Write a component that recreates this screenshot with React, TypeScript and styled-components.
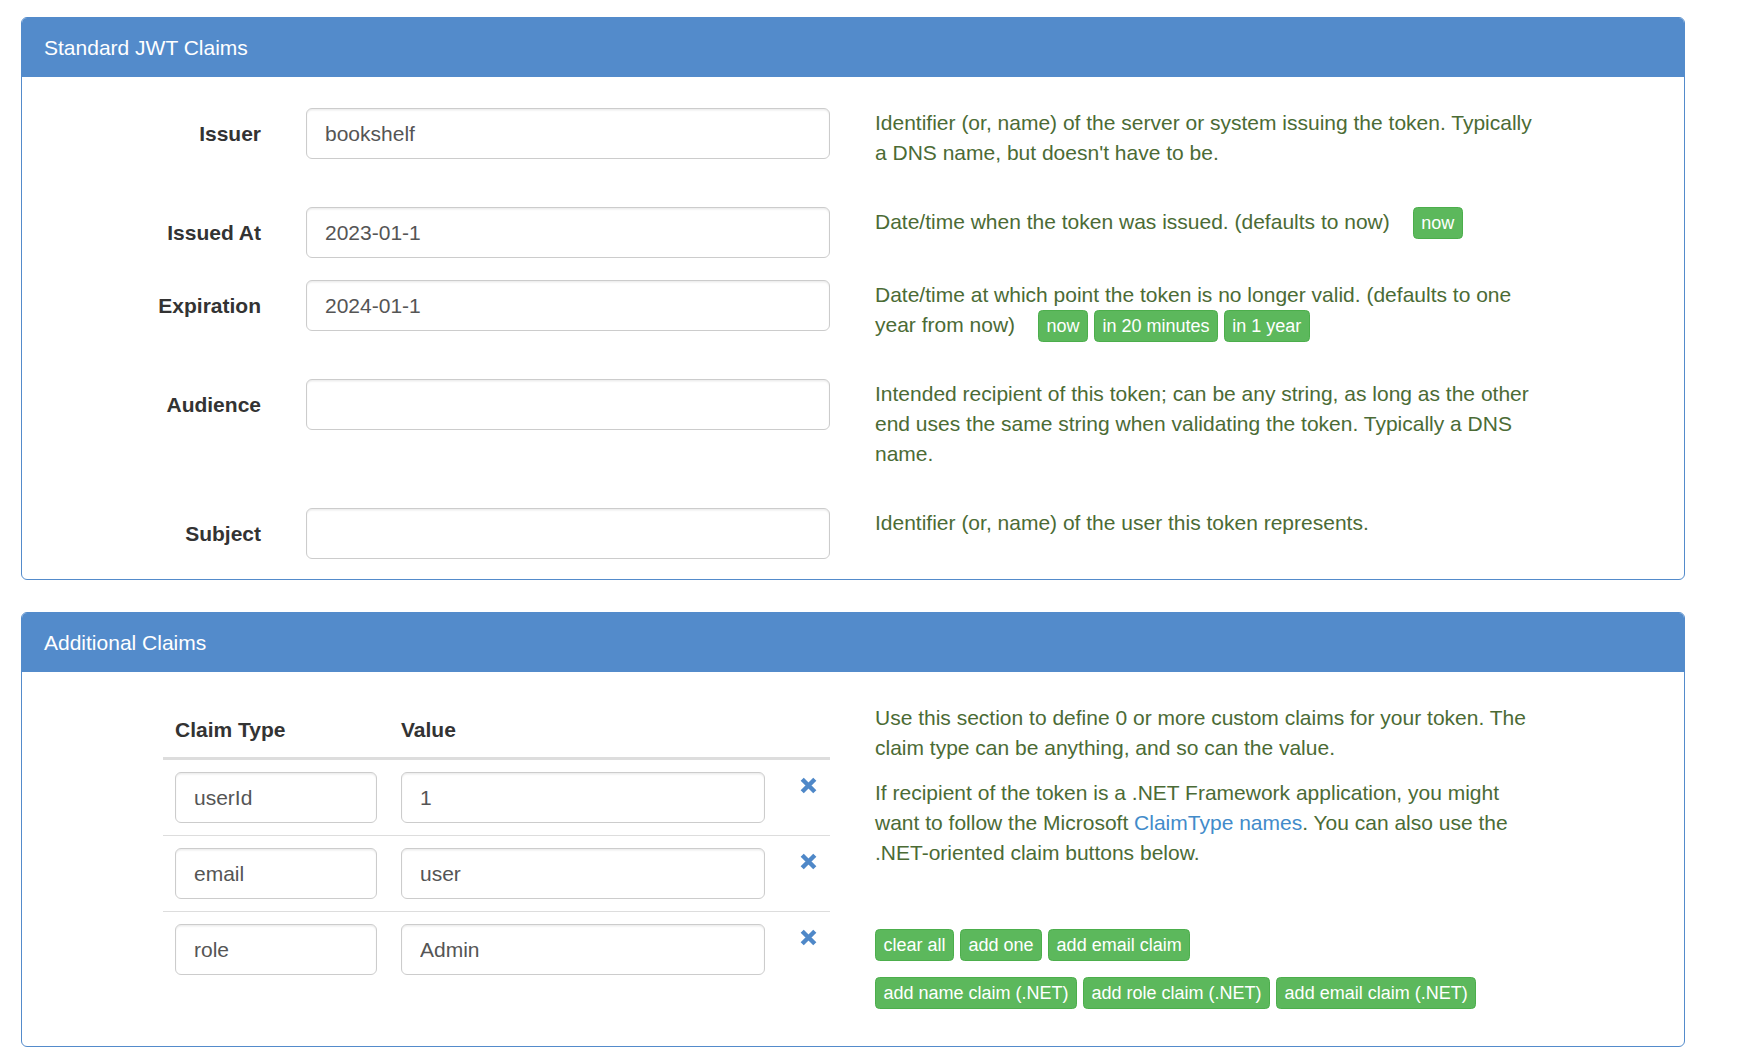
import React from "react";
import styled, { createGlobalStyle } from "styled-components";

const GlobalStyle = createGlobalStyle`
  html, body {
    margin: 0;
    padding: 0;
    background: #ffffff;
  }
  body {
    font-family: "Liberation Sans", Arial, Helvetica, sans-serif;
    font-size: 21px;
    line-height: 30px;
    color: #333333;
  }
  * { box-sizing: border-box; }
`;

const Page = styled.div`
  padding: 17px 0 0 21px;
`;

const Panel = styled.section`
  width: 1664px;
  border: 1px solid #538bcb;
  border-radius: 6px;
  margin-bottom: 32px;
  background: #ffffff;
`;

const PanelHeading = styled.header`
  height: 59px;
  display: flex;
  align-items: center;
  padding: 0 22px;
  background: #538bcb;
  color: #ffffff;
  font-size: 21px;
  border-radius: 5px 5px 0 0;
`;

const FormBody = styled.div`
  padding: 31px 0 20px;
`;

const FormRow = styled.div`
  display: grid;
  grid-template-columns: 239px 524px 668px;
  column-gap: 45px;
  align-items: start;
  margin-bottom: 22px;
  &:last-child { margin-bottom: 0; }
`;

const Label = styled.label`
  height: 51px;
  display: flex;
  align-items: center;
  justify-content: flex-end;
  font-weight: bold;
  color: #333333;
`;

const TextInput = styled.input`
  display: block;
  width: 100%;
  height: 51px;
  padding: 9px 18px;
  font-family: inherit;
  font-size: 21px;
  line-height: 30px;
  color: #555555;
  background: #ffffff;
  border: 1px solid #cccccc;
  border-radius: 6px;
  box-shadow: inset 0 1.5px 1.5px rgba(0, 0, 0, 0.075);
  outline: none;
`;

const Help = styled.p<{ $field?: boolean }>`
  margin: 0 0 ${(p) => (p.$field ? "17px" : "15px")};
  color: #4b6b35;
`;

const Link = styled.a`
  color: #428bca;
  text-decoration: none;
`;

const InlineButtons = styled.span`
  margin-left: 23px;
`;

const SmallButton = styled.button<{ $inline?: boolean }>`
  display: inline-block;
  vertical-align: middle;
  height: 32px;
  margin: ${(p) => (p.$inline ? "-2px 0" : "0")};
  padding: 1.5px 7.5px;
  font-family: inherit;
  font-size: 18px;
  line-height: 27px;
  color: #ffffff;
  background: #5cb85c;
  border: 1px solid #4cae4c;
  border-radius: 4.5px;
  white-space: nowrap;
  cursor: pointer;
`;

const ClaimsBody = styled.div`
  display: grid;
  grid-template-columns: 808px 668px;
  column-gap: 45px;
  align-items: start;
  padding: 31px 0 21px;
`;

const TableArea = styled.div`
  padding-left: 141px;
`;

const ClaimGrid = styled.div<{ $head?: boolean; $first?: boolean }>`
  display: grid;
  grid-template-columns: 226px 388px 53px;
  align-items: start;
  padding: 12px 0;
  border-top: ${(p) => (p.$head || p.$first ? "none" : "1px solid #dddddd")};
  border-bottom: ${(p) => (p.$head ? "3px solid #dddddd" : "none")};
`;

const HeadCell = styled.div`
  padding: 0 12px;
  font-weight: bold;
  color: #333333;
`;

const Cell = styled.div`
  padding: 0 12px;
`;

const RemoveCell = styled.div`
  padding: 5px 0 0 23px;
  line-height: 0;
`;

const RemoveIcon = styled.svg`
  width: 17px;
  height: 17px;
  cursor: pointer;
`;

const ButtonRow = styled.div<{ $first?: boolean }>`
  display: flex;
  gap: 6px;
  margin: ${(p) => (p.$first ? "61px 0 16px" : "0 0 16px")};
`;

const Remove = () => (
  <RemoveIcon viewBox="0 0 17 17" aria-label="remove">
    <path
      d="M2.2 2.2 L14.8 14.8 M14.8 2.2 L2.2 14.8"
      stroke="#4f88c8"
      strokeWidth="4.4"
      strokeLinecap="butt"
      fill="none"
    />
  </RemoveIcon>
);

const claims = [
  { type: "userId", value: "1" },
  { type: "email", value: "user" },
  { type: "role", value: "Admin" },
];

export default function App() {
  return (
    <>
      <GlobalStyle />
      <Page>
        <Panel>
          <PanelHeading>Standard JWT Claims</PanelHeading>
          <FormBody>
            <FormRow>
              <Label>Issuer</Label>
              <TextInput defaultValue="bookshelf" />
              <Help $field>
                Identifier (or, name) of the server or system issuing the token. Typically a DNS name,
                but doesn't have to be.
              </Help>
            </FormRow>
            <FormRow>
              <Label>Issued At</Label>
              <TextInput defaultValue="2023-01-1" />
              <Help $field>
                Date/time when the token was issued. (defaults to now)
                <InlineButtons>
                  <SmallButton $inline>now</SmallButton>
                </InlineButtons>
              </Help>
            </FormRow>
            <FormRow>
              <Label>Expiration</Label>
              <TextInput defaultValue="2024-01-1" />
              <Help $field>
                Date/time at which point the token is no longer valid. (defaults to one year from now)
                <InlineButtons>
                  <SmallButton $inline>now</SmallButton> <SmallButton $inline>in 20 minutes</SmallButton>{" "}
                  <SmallButton $inline>in 1 year</SmallButton>
                </InlineButtons>
              </Help>
            </FormRow>
            <FormRow>
              <Label>Audience</Label>
              <TextInput defaultValue="" />
              <Help $field>
                Intended recipient of this token; can be any string, as long as the other end uses the
                same string when validating the token. Typically a DNS name.
              </Help>
            </FormRow>
            <FormRow>
              <Label>Subject</Label>
              <TextInput defaultValue="" />
              <Help $field>Identifier (or, name) of the user this token represents.</Help>
            </FormRow>
          </FormBody>
        </Panel>

        <Panel>
          <PanelHeading>Additional Claims</PanelHeading>
          <ClaimsBody>
            <TableArea>
              <ClaimGrid $head>
                <HeadCell>Claim Type</HeadCell>
                <HeadCell>Value</HeadCell>
                <HeadCell />
              </ClaimGrid>
              {claims.map((c, i) => (
                <ClaimGrid key={c.type} $first={i === 0}>
                  <Cell>
                    <TextInput defaultValue={c.type} />
                  </Cell>
                  <Cell>
                    <TextInput defaultValue={c.value} />
                  </Cell>
                  <RemoveCell>
                    <Remove />
                  </RemoveCell>
                </ClaimGrid>
              ))}
            </TableArea>
            <div>
              <Help>
                Use this section to define 0 or more custom claims for your token. The claim type can be
                anything, and so can the value.
              </Help>
              <Help>
                If recipient of the token is a .NET Framework application, you might want to follow the
                Microsoft <Link href="#">ClaimType names</Link>. You can also use the .NET-oriented claim
                buttons below.
              </Help>
              <ButtonRow $first>
                <SmallButton>clear all</SmallButton>
                <SmallButton>add one</SmallButton>
                <SmallButton>add email claim</SmallButton>
              </ButtonRow>
              <ButtonRow>
                <SmallButton>add name claim (.NET)</SmallButton>
                <SmallButton>add role claim (.NET)</SmallButton>
                <SmallButton>add email claim (.NET)</SmallButton>
              </ButtonRow>
            </div>
          </ClaimsBody>
        </Panel>
      </Page>
    </>
  );
}
